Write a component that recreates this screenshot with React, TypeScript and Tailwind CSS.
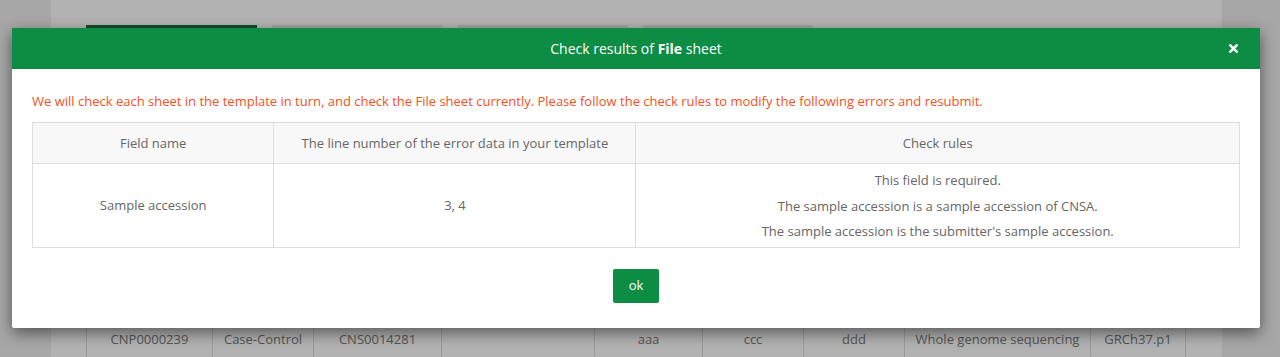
const rules = [
  'This field is required.',
  'The sample accession is a sample accession of CNSA.',
  "The sample accession is the submitter's sample accession.",
];

const bgCells = [
  { w: 'w-[126px]', text: 'CNP0000239' },
  { w: 'w-[101px]', text: 'Case-Control' },
  { w: 'w-[128px]', text: 'CNS0014281' },
  { w: 'w-[153px]', text: '' },
  { w: 'w-[108px]', text: 'aaa' },
  { w: 'w-[101px]', text: 'ccc' },
  { w: 'w-[101px]', text: 'ddd' },
  { w: 'w-[186px]', text: 'Whole genome sequencing' },
  { w: 'w-[95px]', text: 'GRCh37.p1' },
];

function BackgroundPage() {
  return (
    <div className="flex h-[357px] w-full bg-[#f0f0f0]">
      <div className="w-[51px] shrink-0" />
      <div className="flex w-[1171px] shrink-0 flex-col bg-white pl-[35px] pt-[25px]">
        {/* Tabs */}
        <div className="flex gap-[15px]">
          <div className="h-[40px] w-[171px] bg-[#246b45]" />
          <div className="h-[40px] w-[171px] bg-[#ebebeb]" />
          <div className="h-[40px] w-[170px] bg-[#ebebeb]" />
          <div className="h-[40px] w-[170px] bg-[#ebebeb]" />
        </div>
        {/* Table row peeking below the dialog */}
        <div className="mt-[257px] flex h-[36px] border-l border-[#dddddd]">
          {bgCells.map((c, i) => (
            <div
              key={i}
              className={`${c.w} flex shrink-0 items-center justify-center whitespace-nowrap border-r border-[#dddddd] text-[13px] text-[#7a7a7a]`}
            >
              {c.text}
            </div>
          ))}
        </div>
      </div>
      <div className="flex-1" />
    </div>
  );
}

function CloseIcon() {
  return (
    <svg width="9" height="9" viewBox="0 0 9 9" className="block">
      <path d="M1.3 1.3 L7.7 7.7 M7.7 1.3 L1.3 7.7" stroke="white" strokeWidth="2.4" strokeLinecap="square" />
    </svg>
  );
}

function CheckDialog() {
  return (
    <div className="absolute left-[12px] top-[28px] w-[1248px] rounded-[2px] bg-white shadow-[0_5px_15px_rgba(0,0,0,0.5)]">
      {/* Header */}
      <div className="relative flex h-[41px] items-center justify-center bg-[#0d8c43] text-[14px] text-white">
        <span>
          Check results of <b className="font-bold">File</b> sheet
        </span>
        <button className="absolute right-[22px] top-[16px]">
          <CloseIcon />
        </button>
      </div>

      {/* Body */}
      <div className="px-[20px] pb-[25px] pt-[22px]">
        <p className="text-[13px] leading-[20px] text-[#f4511e]">
          We will check each sheet in the template in turn, and check the File sheet currently. Please follow the check
          rules to modify the following errors and resubmit.
        </p>

        <table className="mt-[11px] w-full table-fixed border-collapse text-[13px] text-[#666666]">
          <thead>
            <tr className="bg-[#f8f8f8]">
              <th className="w-[20%] border border-[#dddddd] py-[10px] font-normal leading-[20px]">Field name</th>
              <th className="w-[30%] border border-[#dddddd] py-[10px] font-normal leading-[20px]">
                The line number of the error data in your template
              </th>
              <th className="w-[50%] border border-[#dddddd] py-[10px] font-normal leading-[20px]">Check rules</th>
            </tr>
          </thead>
          <tbody>
            <tr>
              <td className="border border-[#dddddd] text-center">Sample accession</td>
              <td className="border border-[#dddddd] text-center">3, 4</td>
              <td className="border border-[#dddddd] pb-[2px] pt-[4px] text-center leading-[25.5px]">
                {rules.map((r) => (
                  <div key={r}>{r}</div>
                ))}
              </td>
            </tr>
          </tbody>
        </table>

        <div className="mt-[21px] flex justify-center">
          <button className="h-[34px] w-[46px] rounded-[2px] bg-[#0d8c43] text-[13px] text-white">ok</button>
        </div>
      </div>
    </div>
  );
}

export default function App() {
  return (
    <div className="relative h-[357px] w-full overflow-hidden font-['Open_Sans',sans-serif]">
      <BackgroundPage />
      {/* modal backdrop */}
      <div className="absolute inset-0 bg-black/30" />
      <CheckDialog />
    </div>
  );
}
